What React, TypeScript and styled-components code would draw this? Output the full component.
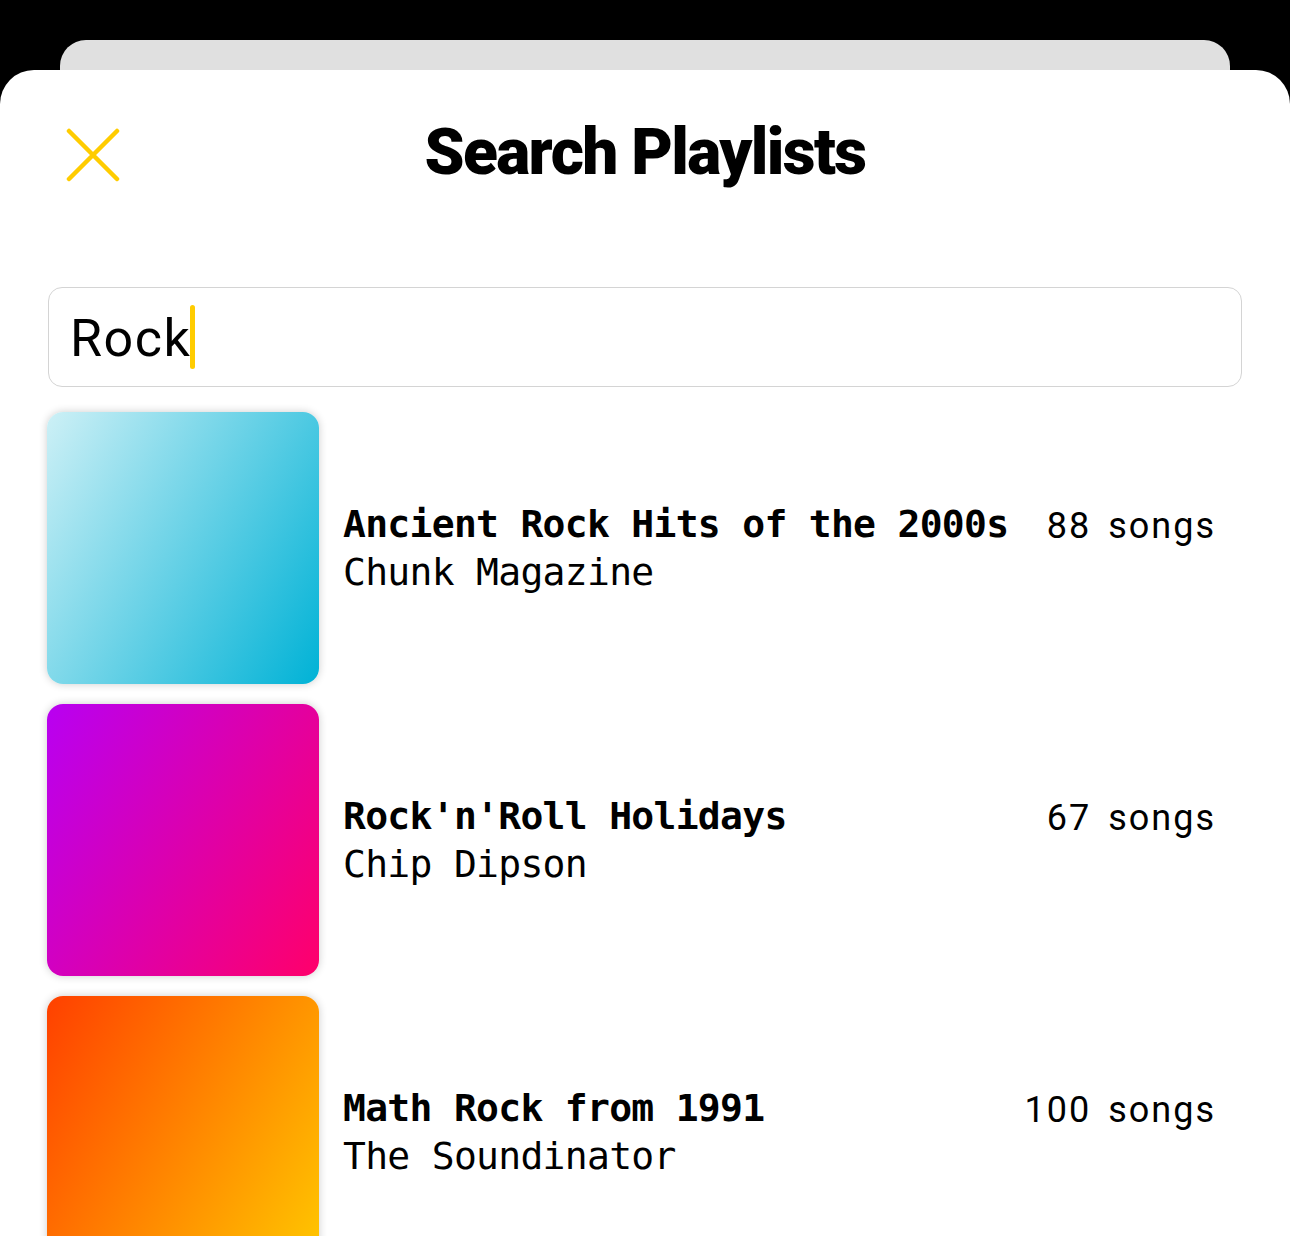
import React from "react";
import styled, { createGlobalStyle } from "styled-components";

const Global = createGlobalStyle`
  html, body { margin: 0; padding: 0; background: #000; }
  body { font-family: "Roboto", "Liberation Sans", sans-serif; overflow: hidden; }
`;

const Page = styled.div`
  background: #000;
  padding-top: 40px;
  height: 1236px;
  box-sizing: border-box;
  display: flex;
  flex-direction: column;
`;

const BackCard = styled.div`
  margin: 0 60px;
  height: 30px;
  background: #e0e0e0;
  border-radius: 26px 26px 0 0;
  flex-shrink: 0;
`;

const Sheet = styled.div`
  flex: 1;
  background: #fff;
  border-radius: 34px 34px 0 0;
  padding: 0 48px;
  overflow: hidden;
`;

const Header = styled.header`
  height: 170px;
  display: grid;
  grid-template-columns: 1fr auto 1fr;
  align-items: center;
`;

const CloseButton = styled.button`
  justify-self: start;
  margin-left: 18px;
  width: 54px;
  height: 54px;
  padding: 0;
  border: none;
  background: transparent;
  display: flex;
  align-items: center;
  justify-content: center;
`;

const Title = styled.h1`
  margin: 0 0 6px;
  font-family: "Roboto", sans-serif;
  font-weight: 900;
  font-size: 64px;
  letter-spacing: -1.6px;
  color: #000;
  white-space: nowrap;
`;

const SearchBox = styled.div`
  margin-top: 47px;
  height: 100px;
  box-sizing: border-box;
  border: 1.5px solid #d4d4d4;
  border-radius: 14px;
  padding-left: 21px;
  display: flex;
  align-items: center;
`;

const SearchText = styled.span`
  font-family: "Roboto", sans-serif;
  font-size: 52px;
  letter-spacing: 1.5px;
  color: #000;
  margin-top: 2px;
`;

const Caret = styled.span`
  display: inline-block;
  width: 5px;
  height: 64px;
  border-radius: 3px;
  background: #ffcc00;
  margin-left: -1px;
`;

const List = styled.ul`
  list-style: none;
  margin: 25px 0 0 -1px;
  padding: 0;
  display: flex;
  flex-direction: column;
  gap: 20px;
`;

const Row = styled.li`
  display: flex;
  align-items: center;
  gap: 24px;
  padding-right: 26px;
`;

const Thumb = styled.div<{ $from: string; $to: string }>`
  width: 272px;
  height: 272px;
  flex-shrink: 0;
  border-radius: 16px;
  background: linear-gradient(120deg, ${(p) => p.$from}, ${(p) => p.$to});
  box-shadow: 0 0 8px rgba(0, 0, 0, 0.2);
`;

const Info = styled.div`
  flex: 1;
  display: flex;
  justify-content: space-between;
  align-items: flex-start;
  gap: 30px;
`;

const Texts = styled.div`
  display: flex;
  flex-direction: column;
`;

const Name = styled.div`
  font-family: "DejaVu Sans Mono", "Liberation Mono", monospace;
  font-weight: 700;
  font-size: 38px;
  letter-spacing: -0.7px;
  line-height: 48px;
  color: #000;
  white-space: nowrap;
`;

const Author = styled.div`
  font-family: "DejaVu Sans Mono", "Liberation Mono", monospace;
  font-weight: 400;
  font-size: 38px;
  letter-spacing: -0.7px;
  line-height: 48px;
  color: #000;
  white-space: nowrap;
`;

const Count = styled.div`
  font-family: "Roboto", sans-serif;
  font-size: 36px;
  letter-spacing: 2px;
  line-height: 48px;
  margin-top: 2px;
  color: #000;
  white-space: nowrap;
  word-spacing: 6px;
`;

const CloseIcon = () => (
  <svg width="54" height="54" viewBox="0 0 54 54">
    <path d="M3 3 L51 51 M51 3 L3 51" stroke="#ffcc00" strokeWidth="4.5" strokeLinecap="round" />
  </svg>
);

const playlists = [
  { name: "Ancient Rock Hits of the 2000s", author: "Chunk Magazine", count: 88, from: "#cdf0f6", to: "#00b2d6" },
  { name: "Rock'n'Roll Holidays", author: "Chip Dipson", count: 67, from: "#b800f2", to: "#ff006a" },
  { name: "Math Rock from 1991", author: "The Soundinator", count: 100, from: "#ff4000", to: "#ffc800" },
];

export default function App() {
  return (
    <>
      <Global />
      <Page>
        <BackCard />
        <Sheet>
          <Header>
            <CloseButton aria-label="Close">
              <CloseIcon />
            </CloseButton>
            <Title>Search Playlists</Title>
            <div />
          </Header>
          <SearchBox>
            <SearchText>Rock</SearchText>
            <Caret />
          </SearchBox>
          <List>
            {playlists.map((p) => (
              <Row key={p.name}>
                <Thumb $from={p.from} $to={p.to} />
                <Info>
                  <Texts>
                    <Name>{p.name}</Name>
                    <Author>{p.author}</Author>
                  </Texts>
                  <Count>{p.count} songs</Count>
                </Info>
              </Row>
            ))}
          </List>
        </Sheet>
      </Page>
    </>
  );
}
